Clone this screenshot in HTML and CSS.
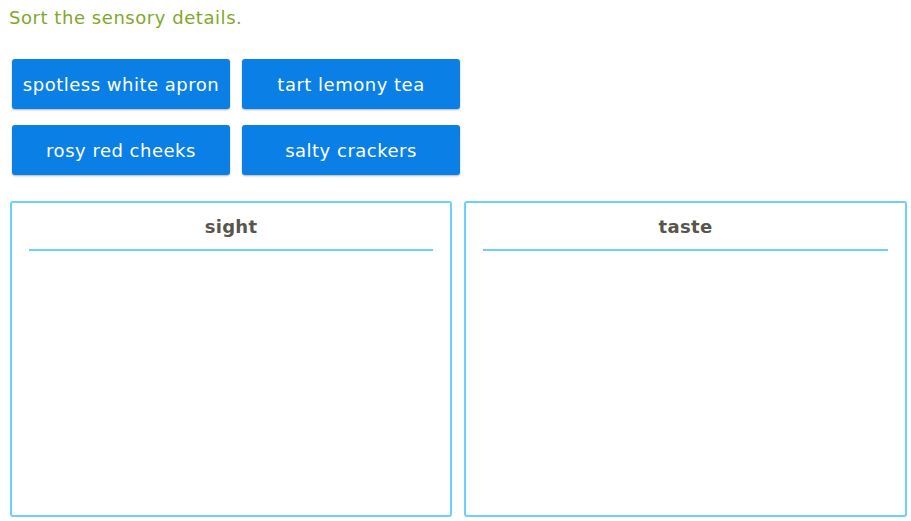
FILE: index.html
```html
<!DOCTYPE html>
<html>
<head>
<meta charset="utf-8">
<link rel="stylesheet" href="styles.css">
</head>
<body>
<div class="page">
  <div class="prompt">Sort the sensory details.</div>
  <div class="tiles">
    <div class="tile">spotless white apron</div>
    <div class="tile">tart lemony tea</div>
    <div class="tile">rosy red cheeks</div>
    <div class="tile">salty crackers</div>
  </div>
  <div class="bins">
    <div class="bin">
      <div class="bin-title">sight</div>
      <div class="bin-rule"></div>
    </div>
    <div class="bin">
      <div class="bin-title">taste</div>
      <div class="bin-rule"></div>
    </div>
  </div>
</div>
</body>
</html>
```
FILE: styles.css
```css
html, body {
  margin: 0;
  padding: 0;
  background: #ffffff;
}
.page {
  font-family: "DejaVu Sans", Verdana, sans-serif;
  padding: 8px 4px 4px 10px;
}
.prompt {
  color: #7fa82a;
  font-size: 18px;
  letter-spacing: 0.55px;
  line-height: 20px;
  margin-left: -1px;
}
.tiles {
  display: grid;
  grid-template-columns: 218px 218px;
  column-gap: 12px;
  row-gap: 16px;
  margin-top: 31px;
  margin-left: 2px;
}
.tile {
  background: #0a7fe6;
  color: #ffffff;
  height: 50px;
  border-radius: 3px;
  box-shadow: 0 1px 2px rgba(0, 0, 0, 0.3);
  display: flex;
  align-items: center;
  justify-content: center;
  font-size: 18px;
  letter-spacing: 0.5px;
}
.bins {
  display: grid;
  grid-template-columns: 442px 443px;
  column-gap: 12px;
  margin-top: 26px;
}
.bin {
  height: 316px;
  box-sizing: border-box;
  border: 2px solid #6dcffc;
  border-radius: 3px;
  padding: 0 17px;
}
.bin-title {
  text-align: center;
  font-weight: bold;
  font-size: 18px;
  letter-spacing: 0.3px;
  color: #57564d;
  padding-top: 14px;
  line-height: 20px;
}
.bin-rule {
  height: 2px;
  background: #6dcffc;
  margin-top: 12px;
}
```
